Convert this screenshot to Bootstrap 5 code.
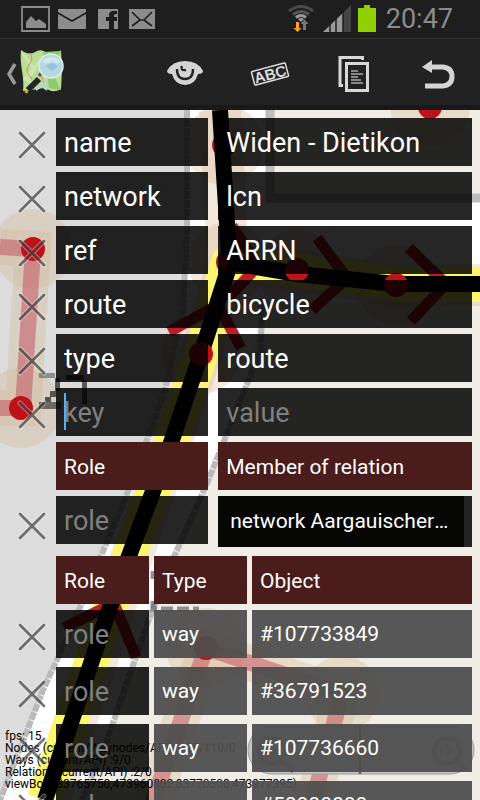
<!DOCTYPE html>
<html lang="en">
<head>
<meta charset="utf-8">
<meta name="viewport" content="width=device-width, initial-scale=1">
<title>Tag editor</title>
<link href="https://cdn.jsdelivr.net/npm/bootstrap@5.3.0/dist/css/bootstrap.min.css" rel="stylesheet">
<style>
  body { font-family: Roboto, "Noto Sans", sans-serif; background: #222; color: #fff; }
  .status-bar { height: 39px; background: #1e1e1e; border-bottom: 1px solid #303030; color: #8c8c8c; }
  .clock { padding: 0 27px 0 7px; font-size: 27px; line-height: 38px; }
  .action-bar { height: 71px; background: #222; border-bottom: 5px solid #191919; }
  .action-bar .btn { width: 84px; }
  .map-debug { left: 5px; bottom: 10px; font-size: 12px; line-height: 12px; color: #000; white-space: pre; }
  .zoom-pad { right: 5px; bottom: 25px; width: 228px; }
  .scroller { padding: 8px 8px 0 0; scrollbar-width: none; }
  .scroller::-webkit-scrollbar { display: none; }
  .tag-grid { display: grid; grid-template-columns: 46px minmax(0, 3fr) minmax(0, 5fr); column-gap: 10px; row-gap: 6px; }
  .field { display: block; width: 100%; height: 48px; padding: 2px 8px 0; border: 0; border-radius: 0; outline: 0;
    background: rgba(0, 0, 0, .85); color: #fff; font-size: 27px; }
  .field::placeholder { color: #808080; opacity: 1; }
  .band { height: 48px; padding: 0 8px; background: #4a1c1c; color: #fff; font-size: 21px; line-height: 50px; font-weight: 400; }
  .cell { height: 48px; padding: 0 8px; background: rgba(78, 78, 78, .94); color: #fff; font-size: 21px; line-height: 48px; }
  .remove { width: 46px; height: 48px; padding: 6px 0 0 16px; border: 0; background: none; line-height: 0; }
  .remove.tall { padding-top: 11px; }
  .remove svg { display: block; width: 32px; height: 32px; }
  .caret::before { content: ""; position: absolute; left: 8px; top: 5px; width: 2px; height: 37px; background: #4fb0ff; }
  .relation-pick { height: 51px; padding: 0 12px; border: 0; border-right: 8px solid #242422; border-radius: 0; background: #060604;
    color: #fff; font-size: 21px; appearance: none; text-overflow: ellipsis; width: 100%; }
  .members { table-layout: fixed; border-collapse: separate; border-spacing: 0; margin-top: 9px; }
  .members th, .members td { padding: 0 5px 9px 0; }
  .members th { padding-bottom: 6px; }
  .members tr > :last-child { padding-right: 0; }
  .members col.c-del { width: 56px; }
  .members col.c-mid { width: 98px; }
</style>
<script src="https://cdn.jsdelivr.net/npm/bootstrap@5.3.0/dist/js/bootstrap.bundle.min.js"></script>
</head>
<body class="vh-100 d-flex flex-column overflow-hidden">
<svg width="0" height="0" class="position-absolute" aria-hidden="true">
  <symbol id="x" viewBox="0 0 32 32"><path d="M4 4 28 28M28 4 4 28" stroke="#fff" stroke-opacity=".35" stroke-width="5" stroke-linecap="round"/><path d="M4 4 28 28M28 4 4 28" stroke="#000" stroke-opacity=".53" stroke-width="2.8" stroke-linecap="round"/></symbol>
</svg>

<header class="flex-shrink-0">
  <div class="status-bar d-flex align-items-center justify-content-between">
    <svg width="160" height="38" viewBox="0 0 160 38" fill="#8c8c8c" aria-hidden="true">
      <path d="M22 7h27v24H22z" fill="none" stroke="#8c8c8c" stroke-width="1.8"/>
      <path d="M26 22l5-6 5 5 3-2 7 5v4H26z"/>
      <path d="M58 9h28v3l-14 8-14-8z"/><path d="M58 14l14 8 14-8v15H58z"/>
      <path fill-rule="evenodd" d="M98 9h20v20h-4v-8h3v-4h-3v-2q0-1 3-1v-3q-8-1-8 4v2h-3v4h3v8H98z"/>
      <path d="M129 9h26v20h-26z"/><path d="M132 12l8 8h4l8-8M140 20l-8 6M144 20l8 6" fill="none" stroke="#1e1e1e" stroke-width="1.6"/>
    </svg>
    <div class="d-flex align-items-center">
      <svg width="94" height="38" viewBox="286 0 94 38" aria-hidden="true">
        <g fill="none" stroke-width="3">
          <path d="M290 11q12-9 24 0" stroke="#4a4a4a"/><path d="M294 14.500q8-6 16 0" stroke="#555"/><path d="M297 17.500q5-4 10 0" stroke="#999"/>
        </g>
        <path d="M299 19q3-2 6 0l-3 3z" fill="#999"/>
        <path d="M297 22h3v6h2.500l-4 4-4-4h2.500z" fill="#ff9f2e"/><path d="M304 30h3v-6h2.500l-4-4.500-4 4.500h2.500z" fill="#777"/>
        <path d="M324 32l28-27v27z" fill="#444"/><path d="M324 32l20-19v19z" fill="#999"/>
        <path d="M331 22v10M337 17v15M344 10v22" stroke="#1e1e1e" stroke-width="1.500"/>
        <path d="M359 8h6V5h6v3h6v24h-18z" fill="#90d000"/>
      </svg>
      <span class="clock">20:47</span>
    </div>
  </div>
  <nav class="action-bar d-flex align-items-center justify-content-between">
    <a href="#" class="d-block" aria-label="Up">
      <svg width="70" height="62" viewBox="0 41 70 62">
        <path d="M15 64l-6 10 6 10" fill="none" stroke="#999" stroke-width="3.500"/>
        <path d="M21 50q8 6 14 2t12 1 14-3l1 20-1 19q-7 4-12 1t-12-1-14 2q1-8-1-20t-1-21z" fill="#b9dd92"/>
        <path d="M43 52l18-1-8 22 8 17-12-2z" fill="#8fcb6d"/>
        <path d="M23 54l12 16-8 9 8 9M24 80l20-24" stroke="#cbe5ab" stroke-width="3" fill="none"/>
        <path d="M30 53q4 6-1 12t3 14M44 83q-4-6 0-14" stroke="#d79a80" stroke-width="1.200" fill="none"/>
        <path d="M38 82l9 8M48 82l-12 8" stroke="#b8d4df" stroke-width="2"/>
        <path d="M42 72l-3 4" stroke="#555" stroke-width="3"/><path d="M39 79l-11 11" stroke="#252525" stroke-width="6"/><path d="M27 90l-1 3" stroke="#e3a536" stroke-width="3"/>
        <circle cx="51" cy="66" r="12" fill="#b6d9df" stroke="#deeceb" stroke-width="1.500"/>
        <path d="M46 66l7-6 5 7-6 4z" fill="#8fb7dd" opacity=".7"/><path d="M41 62q10-10 20 0-8 3-20 0z" fill="#fff" opacity=".4"/>
      </svg>
    </a>
    <div class="d-flex">
      <button class="btn p-0 border-0" aria-label="Show"><svg width="84" height="62" viewBox="144 41 84 62" fill="#d4d4d4"><path d="M167 71q5-10 18-10t18 10q0 3-5 3-3 11-13 11t-13-11q-5 0-5-3z"/><path d="M177 69q0 10 8 10t8-10M186 70q-6 1-4-4" fill="none" stroke="#222" stroke-width="2.400"/></svg></button>
      <button class="btn p-0 border-0" aria-label="Text tags"><svg width="84" height="62" viewBox="228 41 84 62"><g transform="rotate(-15 270 74)"><rect x="252.500" y="67" width="35" height="14" rx="1" fill="none" stroke="#dcdcdc" stroke-width="1.500"/><text x="270" y="79.500" text-anchor="middle" font-family="Liberation Sans, sans-serif" font-weight="700" font-size="15" fill="#dcdcdc">ABC</text></g></svg></button>
      <button class="btn p-0 border-0" aria-label="Copy"><svg width="84" height="62" viewBox="312 41 84 62" fill="none" stroke="#d8d8d8" stroke-width="3"><path d="M362.500 60v-2.500h-22.500v28h3"/><path d="M346.500 63.500h21v27h-21z"/><path d="M351 71h7M351 74h12M351 77h7M351 80h10M351 83h12" stroke="#aaa" stroke-width="1.300"/></svg></button>
      <button class="btn p-0 border-0" aria-label="Undo"><svg width="84" height="62" viewBox="396 41 84 62"><path d="M425 86h18q9-1 9-9.500t-9-9.500h-12" fill="none" stroke="#d4d4d4" stroke-width="5"/><path d="M422 67l10-7v13z" fill="#d4d4d4"/></svg></button>
    </div>
  </nav>
</header>

<main class="position-relative flex-grow-1 overflow-hidden">
  <svg class="position-absolute top-0 start-0 w-100 h-100" viewBox="0 110 480 690" preserveAspectRatio="xMidYMin slice" fill="none" aria-hidden="true">
    <path d="M0 110h480v690H0z" fill="#fff"/>
    <path d="M0 110h187v120l-4 80-18 80-20 55-22 60-26 60-24 60-30 65-43 110z" fill="#dcdcdc"/>
    <path d="M187 110v120l-4 80-18 80-20 55-22 60-26 60-24 60-30 65-43 110" stroke="#bababa" stroke-width="6" stroke-dasharray="8 1"/>
    <path d="M270 110h210v88H270z" fill="#f0ede6"/><path d="M270 110v88h210" stroke="#bdbdbd" stroke-width="9"/>
    <path d="M262 302h218v498H82l24-57 22-63 20-58 25-63 35-78 42-106z" fill="#f0ede6"/>
    <path d="M262 299l-1 50-53 132-35 78-25 63-20 58-22 63-24 57" stroke="#bababa" stroke-width="6" stroke-dasharray="8 1"/>
    <g fill="#d5b38a" fill-opacity=".3">
      <circle cx="33" cy="249" r="40"/><circle cx="21" cy="408" r="40"/><circle cx="224" cy="145" r="40"/><circle cx="228" cy="262" r="40"/>
      <circle cx="297" cy="270" r="40"/><circle cx="396" cy="285" r="40"/><circle cx="201" cy="354" r="40"/><circle cx="430" cy="106" r="40"/>
      <circle cx="206" cy="648" r="40"/><circle cx="342" cy="694" r="38"/>
    </g>
    <g stroke="#d5b38a" stroke-opacity=".3" stroke-width="36">
      <path d="M0 247l33 2-10 159H0M150 810l56-162 136 46-30 110"/>
      <path d="M220 110l8 152-27 92-152 446M228 262l69 8 99 16 84-1" stroke-width="42"/>
    </g>
    <path d="M0 247l33 2-10 159H0M150 810l56-162 136 46-30 110" stroke="#c24a5a" stroke-opacity=".5" stroke-width="16"/>
    <path d="M228 262l-27 92-29 86-63 170-65 190M228 262l69 8 99 14h84" stroke="#fcf56f" stroke-width="34"/>
    <circle cx="228" cy="262" r="17" fill="#fcf56f"/>
    <path d="M232 226l26 40-32 34M317 238l30 40-35 32M409 248l37 36-35 37M169 332l49-27 23 43M64 628l50-25 22 54" stroke="#bd1d22" stroke-width="11"/>
    <g fill="#be121b"><circle cx="228" cy="262" r="12"/><circle cx="224" cy="145" r="12"/></g>
    <path d="M220 110l9 145M228 270l-27 84-29 86-63 170-64 190M228 262l69 12 99 10h84" stroke="#000" stroke-width="16"/>
    <g fill="#be121b"><circle cx="297" cy="270" r="12"/><circle cx="396" cy="285" r="12"/><circle cx="201" cy="354" r="12"/><circle cx="430" cy="107" r="12"/><circle cx="33" cy="249" r="12"/><circle cx="21" cy="408" r="12"/><circle cx="206" cy="648" r="12"/></g>
    <g fill="#000"><path d="M39 373h16v5H39z" fill-opacity=".35"/><path d="M55 378h5v13h-5zM50 391h6v6h-6zM45 397h6v5h-6z" fill-opacity=".6"/><path d="M39 402h22v7H39z" fill-opacity=".5"/><path d="M66 375h18v5H66zM82 380h5v24h-5z" fill-opacity=".6"/></g>
    <path d="M153 571v8M153 601v8h46" stroke="#666" stroke-width="5" stroke-opacity=".7" stroke-dasharray="12 4"/>
  </svg>
  <svg class="zoom-pad position-absolute" viewBox="0 0 228 50" fill="none" aria-hidden="true">
    <rect x="1" y="1" width="226" height="48" rx="24" fill="#c4c4c4" stroke="#999"/><path d="M113 1v48" stroke="#555" stroke-width="2"/>
    <g stroke="#888" stroke-width="4"><circle cx="25" cy="26" r="13"/><path d="M35 36l11 11M18 26h14"/><circle cx="200" cy="26" r="13"/><path d="M210 36l11 9M193 26h14M200 19v14"/></g>
  </svg>
  <div class="map-debug position-absolute">fps: 15
Nodes (current/Waynodes/API) :125/110/0
Ways (current/API) :9/0
Relations (current/API) :2/0
viewBox (83765750,473960802,83770508,473977395)</div>

  <form class="scroller position-relative h-100 overflow-auto">
    <div class="tag-grid">
      <button type="button" class="remove" aria-label="Remove name"><svg><use href="#x"/></svg></button>
      <input class="field" aria-label="Key" value="name"><input class="field" aria-label="Value" value="Widen - Dietikon">
      <button type="button" class="remove" aria-label="Remove network"><svg><use href="#x"/></svg></button>
      <input class="field" aria-label="Key" value="network"><input class="field" aria-label="Value" value="lcn">
      <button type="button" class="remove" aria-label="Remove ref"><svg><use href="#x"/></svg></button>
      <input class="field" aria-label="Key" value="ref"><input class="field" aria-label="Value" value="ARRN">
      <button type="button" class="remove" aria-label="Remove route"><svg><use href="#x"/></svg></button>
      <input class="field" aria-label="Key" value="route"><input class="field" aria-label="Value" value="bicycle">
      <button type="button" class="remove" aria-label="Remove type"><svg><use href="#x"/></svg></button>
      <input class="field" aria-label="Key" value="type"><input class="field" aria-label="Value" value="route">
      <button type="button" class="remove" aria-label="Remove empty tag"><svg><use href="#x"/></svg></button>
      <div class="caret position-relative"><input class="field" aria-label="Key" placeholder="key"></div><input class="field" aria-label="Value" placeholder="value">
      <span></span><div class="band">Role</div><div class="band">Member of relation</div>
      <button type="button" class="remove tall" aria-label="Remove membership"><svg><use href="#x"/></svg></button>
      <input class="field" aria-label="Role in relation" placeholder="role">
      <select class="relation-pick" aria-label="Relation"><option>network Aargauischer Radrouten</option></select>
    </div>
    <table class="members w-100">
      <colgroup><col class="c-del"><col class="c-mid"><col class="c-mid"><col></colgroup>
      <thead><tr><td></td><th scope="col"><div class="band">Role</div></th><th scope="col"><div class="band">Type</div></th><th scope="col"><div class="band">Object</div></th></tr></thead>
      <tbody>
        <tr><td><button type="button" class="remove d-block" aria-label="Remove member"><svg><use href="#x"/></svg></button></td><td><input class="field" aria-label="Role" placeholder="role"></td><td><div class="cell">way</div></td><td><div class="cell">#107733849</div></td></tr>
        <tr><td><button type="button" class="remove d-block" aria-label="Remove member"><svg><use href="#x"/></svg></button></td><td><input class="field" aria-label="Role" placeholder="role"></td><td><div class="cell">way</div></td><td><div class="cell">#36791523</div></td></tr>
        <tr><td><button type="button" class="remove d-block" aria-label="Remove member"><svg><use href="#x"/></svg></button></td><td><input class="field" aria-label="Role" placeholder="role"></td><td><div class="cell">way</div></td><td><div class="cell">#107736660</div></td></tr>
        <tr><td><button type="button" class="remove d-block" aria-label="Remove member"><svg><use href="#x"/></svg></button></td><td><input class="field" aria-label="Role" placeholder="role"></td><td><div class="cell">way</div></td><td><div class="cell">#50888888</div></td></tr>
      </tbody>
    </table>
  </form>
</main>
</body>
</html>
